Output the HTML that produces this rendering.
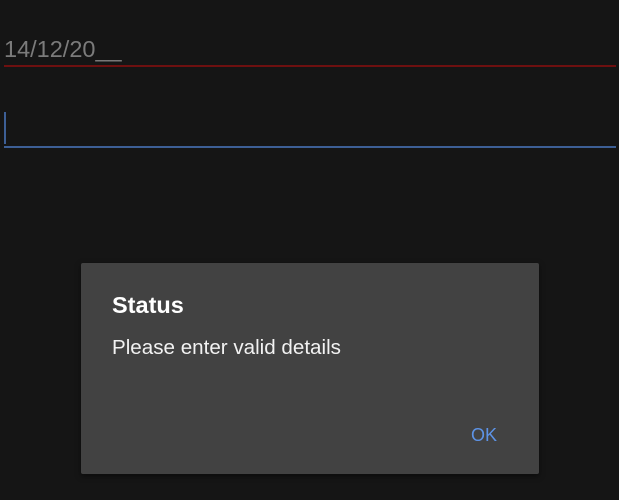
<!DOCTYPE html>
<html><head><style>
body{margin:0;width:619px;height:500px;background:#151515;position:relative;overflow:hidden;font-family:"Liberation Sans",sans-serif}
div,span{position:absolute}
</style></head><body>
<span style="left:4px;top:36px;font-size:23.5px;color:#7b7b7b;white-space:nowrap">14/12/20__</span>
<div style="left:4px;top:65px;width:612px;height:2px;background:#6e1010"></div>
<div style="left:4px;top:112px;width:2px;height:32px;background:#3d5f95"></div>
<div style="left:4px;top:146px;width:612px;height:2px;background:#3d5f95"></div>
<div style="left:81px;top:263px;width:458px;height:211px;background:#424242;border-radius:2px;box-shadow:0 2px 6px rgba(0,0,0,.5)"></div>
<span style="left:112px;top:292px;font-size:23.5px;font-weight:bold;color:#fff">Status</span>
<span style="left:112px;top:336px;font-size:20.6px;color:#f2f2f2;white-space:nowrap">Please enter valid details</span>
<span style="left:471px;top:425px;font-size:18px;color:#5d93e6">OK</span>
</body></html>
